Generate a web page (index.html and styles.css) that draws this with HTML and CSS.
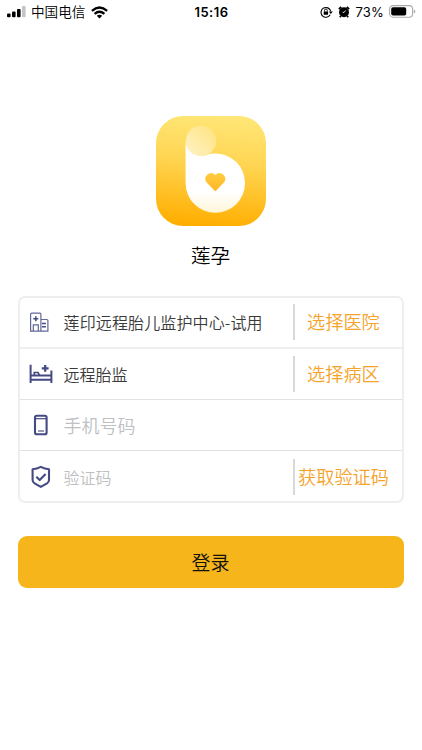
FILE: index.html
```html
<!DOCTYPE html>
<html lang="zh-CN">
<head>
<meta charset="utf-8">
<title>莲孕</title>
<link rel="stylesheet" href="styles.css">
</head>
<body>
<header class="status">
  <div class="status-left">
    <svg width="19" height="12" viewBox="0 0 19 12"><rect x="0" y="7.5" width="3.6" height="3.8" rx="1"/><rect x="5" y="5.5" width="3.6" height="5.8" rx="1"/><rect x="10" y="3" width="3.6" height="8.3" rx="1"/><rect x="15" y="0" width="3.6" height="11.3" rx="1" fill="#c4c4c4"/></svg>
    <span class="carrier">中国电信</span>
    <svg width="17" height="13" viewBox="0 0 17 13"><g fill="none" stroke="#000" stroke-width="2.3"><path d="M.9 4.8Q8.5-1.8 16.1 4.8"/><path d="M3.6 7.8Q8.5 3.6 13.4 7.8"/></g><path d="M5.8 9.8Q8.5 7.6 11.2 9.8L8.5 12.5Z"/></svg>
  </div>
  <time class="clock">15:16</time>
  <div class="status-right">
    <svg class="lock" width="13" height="12" viewBox="0 0 13 12"><path d="M10.2 8.8A4.9 4.9 0 1 1 10.7 5.2" fill="none" stroke="#000" stroke-width="1.1"/><path d="M8.8 5.5h4L10.8 8Z"/><rect x="3.7" y="5.4" width="4.4" height="3.3" rx=".5"/><path d="M4.5 5.6V4.4a1.4 1.4 0 0 1 2.8 0v1.2" fill="none" stroke="#000" stroke-width=".9"/></svg>
    <svg class="alarm" width="12" height="12" viewBox="0 0 12 12"><circle cx="6" cy="6.2" r="5"/><path d="M.9 3.1 3.2.9M8.8.9l2.3 2.2M2.8 10 1.9 11.2M9.2 10l.9 1.2" stroke="#000" stroke-width="1.9"/><path d="M7.6 4.4 6 6.5 4.6 6.2" fill="none" stroke="#fff" stroke-width=".8"/></svg>
    <span class="percent">73%</span>
    <svg class="battery" width="27" height="13" viewBox="0 0 27 13"><rect x=".6" y=".6" width="23" height="11.6" rx="3.4" fill="none" stroke="#aaa" stroke-width="1.1"/><rect x="2.2" y="2.2" width="15" height="8.4" rx="1.8"/><path d="M24.8 4.4q1.5.4 1.5 2t-1.5 2Z" fill="#aaa"/></svg>
  </div>
</header>
<main>
  <svg class="logo" width="110" height="110" viewBox="0 0 110 110">
    <defs>
      <linearGradient id="tile" x1=".55" y1="0" x2=".45" y2="1"><stop stop-color="#ffe676"/><stop offset=".4" stop-color="#ffd654"/><stop offset="1" stop-color="#ffae00"/></linearGradient>
      <linearGradient id="letter" x1="0" y1="0" x2="0" y2="1"><stop offset=".7" stop-color="#fff"/><stop offset="1" stop-color="#fff6d8"/></linearGradient>
      <linearGradient id="ball" x1="1" y1="0" x2="0" y2="1"><stop stop-color="#ffe27c"/><stop offset="1" stop-color="#fff3c8"/></linearGradient>
      <linearGradient id="heart" x1="0" y1="0" x2="0" y2="1"><stop stop-color="#ffcb3e"/><stop offset="1" stop-color="#ffb726"/></linearGradient>
    </defs>
    <rect width="110" height="110" rx="27" fill="url(#tile)"/>
    <path d="M29.6 25C30.2 33 36.5 39.8 45 39.8C50.2 39.8 52 37.4 59.3 37.4A29.7 29.7 0 1 1 29.6 67Z" fill="url(#letter)"/>
    <circle cx="45" cy="24.8" r="15.1" fill="url(#ball)"/>
    <path d="M59.3 74.2 51.6 66.2C47 61.2 54 55 59.3 60.2C64.6 55 71.6 61.2 67 66.2Z" fill="url(#heart)" stroke="url(#heart)" stroke-width="1.8" stroke-linejoin="round"/>
  </svg>
  <h1 class="name">莲孕</h1>
  <form class="card">
    <div class="row raised">
      <svg class="icon" width="24" height="24" viewBox="0 0 24 24" fill="none" stroke="#626898" stroke-width="1.2"><path d="M1.6 21.2V4.3q0-1.2 1.2-1.2h7.9q1.2 0 1.2 1.2v16.9"/><path d="M11.9 9.5h6q1 0 1 1v10.7H1M4.3 21v-6.2h5V21"/><path d="M6.8 6.3v5M4.3 8.8h5M13 13.4h3.9M13 16.7h3.9" stroke="#454a83" stroke-width="1.5"/></svg>
      <span class="value facility">莲印远程胎儿监护中心-试用</span><a class="action">选择医院</a>
    </div>
    <div class="row bold-line">
      <svg class="icon" width="24" height="24" viewBox="0 0 24 24" fill="none" stroke="#454a83" stroke-width="2"><path d="M1.6 2.8v18.1M22.4 8.6v12.3M1.5 13.6h21M1.5 17.8h21"/><path d="M5.3 13.3v-2.8h3.8l1.4 2.8" stroke-width="1.7"/><path d="M16.2 3v6.8M12.8 6.4h6.8" stroke-width="2.3"/></svg>
      <span class="value">远程胎监</span><a class="action">选择病区</a>
    </div>
    <div class="row">
      <svg class="icon" width="24" height="24" viewBox="0 0 24 24" fill="none" stroke="#454a83"><rect x="6" y="2.8" width="11.6" height="18.4" rx="1.8" stroke-width="2.1"/><path d="M6 5.7h12" stroke-width="1.2"/><path d="M9 18h6" stroke-width="1.1"/></svg>
      <span class="value hint phone">手机号码</span>
    </div>
    <div class="row last">
      <svg class="icon" width="24" height="24" viewBox="0 0 24 24" fill="none" stroke="#454a83" stroke-width="2.1" stroke-linejoin="round"><path d="M11.8 1.9Q15.8 3.9 20 4.2V15Q20 17.2 18 18.3L11.8 21.9 5.6 18.3Q3.6 17.2 3.6 15V4.2Q7.8 3.9 11.8 1.9Z"/><path d="m7.3 11.8 3.4 3.3 5.9-6"/></svg>
      <span class="value hint">验证码</span><a class="action code">获取验证码</a>
    </div>
  </form>
  <button class="login">登录</button>
</main>
</body>
</html>
```
FILE: styles.css
```css
* { box-sizing: border-box; }
body {
  margin: 0;
  background: #fff;
  color: #000;
  font-family: "Noto Sans CJK SC", sans-serif;
  font-weight: 350;
}
.status {
  display: grid;
  grid-template-columns: 1fr auto 1fr;
  align-items: center;
  height: 24px;
  padding: 0 6px 0 7px;
}
.status-left, .status-right { display: flex; align-items: center; }
.status-right { justify-content: flex-end; }
.carrier { margin: 0 6px 0 5px; font-size: 13.6px; line-height: 20px; padding-bottom: 3px; }
.clock { font: 600 13px/24px Inter, sans-serif; letter-spacing: .5px; }
.alarm { margin: 0 5px 1px; }
.battery { margin-bottom: 1px; }
.percent { margin-right: 5px; font: 400 13px/24px Inter, sans-serif; letter-spacing: .2px; }
main {
  display: flex;
  flex-direction: column;
  align-items: center;
  padding: 92px 18px 0;
}
.logo { display: block; }
.name { margin: 15px 1px 1px 0; font-size: 19.6px; font-weight: 350; line-height: 28px; }
.card {
  width: 386px;
  height: 207px;
  margin-top: 26px;
  border: 2px solid #eee;
  border-radius: 7px;
  display: grid;
  grid-template-rows: 49px 52px 51px 51px;
}
.row { display: flex; align-items: center; padding-left: 9px; }
.row + .row { border-top: 1px solid #e2e2e2; }
.row.bold-line { border-top: 2px solid #eee; }
.row.raised { padding-bottom: 1px; }
.row.last { padding-top: 2px; }
.icon { flex: none; }
.value { flex: 1; margin-left: 10.5px; font-size: 16px; color: #3a3a3a; white-space: nowrap; }
.facility { letter-spacing: .13px; }
.hint { color: #bebfc3; }
.phone { font-size: 18px; }
.action {
  width: 109px;
  height: 36px;
  padding-left: 12px;
  border-left: 2px solid #d8d8da;
  font-size: 18.2px;
  line-height: 34px;
  color: #f5a32a;
  white-space: nowrap;
}
.code { padding-left: 3px; }
.login {
  width: 386px;
  height: 52px;
  margin-top: 33px;
  padding: 0 1px 0 0;
  border: 0;
  border-radius: 9px;
  background: #f6b51b;
  color: #111;
  font: 350 19px/52px "Noto Sans CJK SC", sans-serif;
}
```
